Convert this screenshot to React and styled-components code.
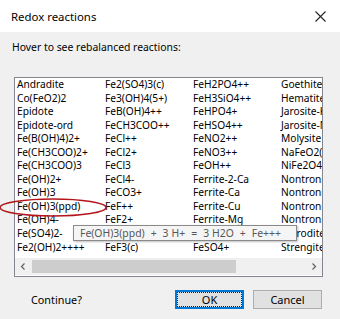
import React from "react";
import styled, { createGlobalStyle } from "styled-components";

const GlobalStyle = createGlobalStyle`
  html, body {
    margin: 0;
    padding: 0;
    background: #f0f0f0;
  }
  body {
    font-family: "Noto Sans", "Open Sans", sans-serif;
    color: #000;
  }
`;

const columns = [
  [
    "Andradite",
    "Co(FeO2)2",
    "Epidote",
    "Epidote-ord",
    "Fe(B(OH)4)2+",
    "Fe(CH3COO)2+",
    "Fe(CH3COO)3",
    "Fe(OH)2+",
    "Fe(OH)3",
    "Fe(OH)3(ppd)",
    "Fe(OH)4-",
    "Fe(SO4)2-",
    "Fe2(OH)2++++",
  ],
  [
    "Fe2(SO4)3(c)",
    "Fe3(OH)4(5+)",
    "FeB(OH)4++",
    "FeCH3COO++",
    "FeCl++",
    "FeCl2+",
    "FeCl3",
    "FeCl4-",
    "FeCO3+",
    "FeF++",
    "FeF2+",
    "FeF3",
    "FeF3(c)",
  ],
  [
    "FeH2PO4++",
    "FeH3SiO4++",
    "FeHPO4+",
    "FeHSO4++",
    "FeNO2++",
    "FeNO3++",
    "FeOH++",
    "Ferrite-2-Ca",
    "Ferrite-Ca",
    "Ferrite-Cu",
    "Ferrite-Mg",
    "FeSO4",
    "FeSO4+",
  ],
  [
    "Goethite",
    "Hematite",
    "Jarosite-K",
    "Jarosite-Na",
    "Molysite",
    "NaFeO2(c)",
    "NiFe2O4",
    "Nontronite-Ca",
    "Nontronite-H",
    "Nontronite-K",
    "Nontronite-Mg",
    "Pyrrodite",
    "Strengite",
  ],
];

const Dialog = styled.div`
  position: relative;
  width: 340px;
  height: 319px;
  background: #f0f0f0;
  display: flex;
  flex-direction: column;
  overflow: hidden;
`;

const TitleBar = styled.div`
  height: 32px;
  background: #fff;
  display: flex;
  align-items: center;
  justify-content: space-between;
  padding: 0 14px 0 11px;
  font-size: 11.4px;
`;

const CloseIcon = styled.svg`
  width: 11px;
  height: 11px;
  stroke: #222;
  stroke-width: 1.1;
`;

const Body = styled.div`
  flex: 1;
  display: flex;
  flex-direction: column;
  padding: 8px 18px 0 14px;
`;

const Prompt = styled.div`
  font-size: 10.4px;
  margin-left: -2px;
  line-height: 14px;
`;

const ListBox = styled.div`
  margin-top: 23px;
  width: 309px;
  height: 200px;
  box-sizing: border-box;
  border: 1px solid #828790;
  background: #fff;
  display: flex;
  flex-direction: column;
`;

const Columns = styled.div`
  flex: 1;
  display: flex;
  overflow: hidden;
  padding-left: 2px;
`;

const Column = styled.div`
  flex: 0 0 88px;
  display: flex;
  flex-direction: column;
  white-space: nowrap;
`;

const Item = styled.div`
  font-size: 10.2px;
  height: 13.55px;
  line-height: 13.55px;
`;

const HScroll = styled.div`
  height: 17px;
  display: flex;
  align-items: center;
  background: #f0f0f0;
  margin-bottom: 1px;
`;

const Arrow = styled.svg`
  width: 17px;
  height: 17px;
  flex: none;
  fill: none;
  stroke: #606060;
  stroke-width: 1.2;
`;

const Track = styled.div`
  flex: 1;
  height: 100%;
  display: flex;
  align-items: center;
`;

const Thumb = styled.div`
  width: 204px;
  height: 13px;
  background: #cdcdcd;
`;

const Footer = styled.div`
  display: flex;
  align-items: center;
  margin-top: 13px;
  padding-left: 17px;
`;

const Question = styled.div`
  font-size: 10.8px;
  flex: 1;
`;

const Button = styled.button`
  width: 69px;
  height: 19px;
  margin-left: 9px;
  box-sizing: border-box;
  font-family: inherit;
  font-size: 11px;
  color: #000;
  background: #e1e1e1;
  border: 1px solid ${(p) => (p.$primary ? "#0078d7" : "#adadad")};
  padding: 0;
  display: flex;
  align-items: center;
  justify-content: center;
  outline: ${(p) => (p.$primary ? "1px dotted #222" : "none")};
  outline-offset: -3px;
  box-shadow: ${(p) => (p.$primary ? "inset 0 0 0 1px #0078d7" : "none")};
`;

const Tooltip = styled.div`
  position: absolute;
  left: 73px;
  top: 225px;
  height: 16px;
  box-sizing: border-box;
  width: 224px;
  padding: 0 6px;
  background: #f5f5f5;
  border: 1px solid #8a8a8a;
  box-shadow: 1px 1px 2px rgba(0, 0, 0, 0.25);
  font-size: 10.4px;
  line-height: 14px;
  color: #575757;
  white-space: pre;
  word-spacing: 0.3px;
  overflow: hidden;
`;

const Ellipse = styled.svg`
  position: absolute;
  left: 0;
  top: 197px;
  width: 110px;
  height: 21px;
  overflow: visible;
`;

export default function App() {
  return (
    <>
      <GlobalStyle />
      <Dialog>
        <TitleBar>
          <span>Redox reactions</span>
          <CloseIcon viewBox="0 0 11 11">
            <line x1="0.5" y1="0.5" x2="10.5" y2="10.5" />
            <line x1="10.5" y1="0.5" x2="0.5" y2="10.5" />
          </CloseIcon>
        </TitleBar>
        <Body>
          <Prompt>Hover to see rebalanced reactions:</Prompt>
          <ListBox>
            <Columns>
              {columns.map((col, i) => (
                <Column key={i}>
                  {col.map((name) => (
                    <Item key={name}>{name}</Item>
                  ))}
                </Column>
              ))}
            </Columns>
            <HScroll>
              <Arrow viewBox="0 0 17 17">
                <polyline points="9.5,5.5 6.5,8.5 9.5,11.5" />
              </Arrow>
              <Track>
                <Thumb />
              </Track>
              <Arrow viewBox="0 0 17 17">
                <polyline points="7.5,5.5 10.5,8.5 7.5,11.5" />
              </Arrow>
            </HScroll>
          </ListBox>
          <Footer>
            <Question>Continue?</Question>
            <Button $primary>OK</Button>
            <Button>Cancel</Button>
          </Footer>
        </Body>
        <Tooltip>{"Fe(OH)3(ppd)  +  3 H+  =  3 H2O  +  Fe+++"}</Tooltip>
        <Ellipse viewBox="0 0 110 21">
          <ellipse
            cx="53"
            cy="10.5"
            rx="53"
            ry="8.5"
            fill="none"
            stroke="#b3151b"
            strokeWidth="1.6"
          />
        </Ellipse>
      </Dialog>
    </>
  );
}
